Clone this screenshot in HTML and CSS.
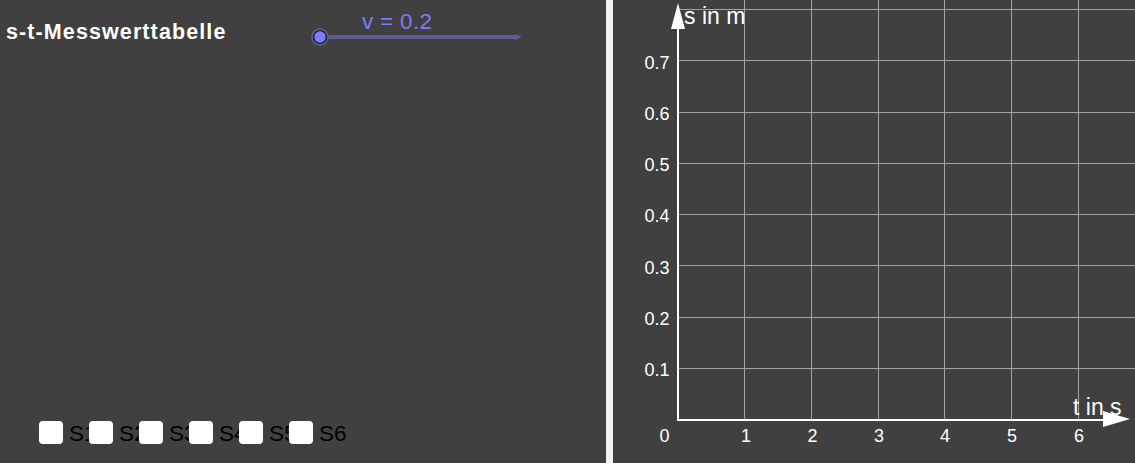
FILE: index.html
```html
<!DOCTYPE html>
<html lang="de">
<head>
<meta charset="utf-8">
<title>s-t-Messwerttabelle</title>
<link rel="stylesheet" href="styles.css">
</head>
<body>
<div class="app">
  <section class="left">
    <div class="top-row">
      <h1 class="title">s-t-Messwerttabelle</h1>
      <svg class="slider" width="222" height="50" viewBox="0 0 222 50">
        <line x1="10" y1="37" x2="206" y2="37" stroke="#5b5b96" stroke-width="4"/>
        <polygon points="205,34 212,37 205,40" fill="#5b5b96"/>
        <circle cx="10" cy="37" r="9" fill="#595985"/>
        <circle cx="10" cy="37" r="6.3" fill="#7b7bff" stroke="#1e1e2e" stroke-width="1.3"/>
        <text x="52" y="29" class="slider-label">v = 0.2</text>
      </svg>
    </div>
    <div class="checks">
      <div class="check"><span class="box"></span><span class="lbl">S1</span></div>
      <div class="check"><span class="box"></span><span class="lbl">S2</span></div>
      <div class="check"><span class="box"></span><span class="lbl">S3</span></div>
      <div class="check"><span class="box"></span><span class="lbl">S4</span></div>
      <div class="check"><span class="box"></span><span class="lbl">S5</span></div>
      <div class="check"><span class="box"></span><span class="lbl">S6</span></div>
    </div>
  </section>
  <div class="divider"></div>
  <section class="right">
    <svg class="graph" width="522" height="463" viewBox="0 0 522 463">
      <g class="grid">
        <line x1="131.5" y1="0" x2="131.5" y2="420"/>
        <line x1="198.5" y1="0" x2="198.5" y2="420"/>
        <line x1="265.5" y1="0" x2="265.5" y2="420"/>
        <line x1="331.5" y1="0" x2="331.5" y2="420"/>
        <line x1="398.5" y1="0" x2="398.5" y2="420"/>
        <line x1="465.5" y1="0" x2="465.5" y2="420"/>
        <line x1="65" y1="368.5" x2="522" y2="368.5"/>
        <line x1="65" y1="317.5" x2="522" y2="317.5"/>
        <line x1="65" y1="265.5" x2="522" y2="265.5"/>
        <line x1="65" y1="214.5" x2="522" y2="214.5"/>
        <line x1="65" y1="163.5" x2="522" y2="163.5"/>
        <line x1="65" y1="112.5" x2="522" y2="112.5"/>
        <line x1="65" y1="60.5" x2="522" y2="60.5"/>
        <line x1="65" y1="9.5" x2="522" y2="9.5"/>
      </g>
      <g class="axes">
        <line x1="65" y1="421" x2="65" y2="20"/>
        <line x1="64" y1="420" x2="500" y2="420"/>
        <polygon points="65,3 58,29 72,29"/>
        <polygon points="517,419 490,411 490,427"/>
      </g>
      <g class="ytick">
        <text x="56.5" y="69">0.7</text>
        <text x="56.5" y="120">0.6</text>
        <text x="56.5" y="171">0.5</text>
        <text x="56.5" y="222">0.4</text>
        <text x="56.5" y="274">0.3</text>
        <text x="56.5" y="325">0.2</text>
        <text x="56.5" y="376">0.1</text>
      </g>
      <g class="xtick">
        <text x="51.5" y="442">0</text>
        <text x="133" y="442">1</text>
        <text x="199.5" y="442">2</text>
        <text x="266" y="442">3</text>
        <text x="332" y="442">4</text>
        <text x="399" y="442">5</text>
        <text x="466" y="442">6</text>
      </g>
      <text class="axis-label" x="71" y="24">s in m</text>
      <text class="axis-label" x="460" y="415">t in s</text>
    </svg>
  </section>
</div>
</body>
</html>
```
FILE: styles.css
```css
html, body {
  margin: 0;
  padding: 0;
  background: #404040;
  overflow: hidden;
}

.app {
  display: flex;
  width: 1135px;
  height: 463px;
  font-family: "Liberation Sans", Arial, sans-serif;
}

.left {
  width: 606px;
  flex: 0 0 606px;
  display: flex;
  flex-direction: column;
  justify-content: space-between;
  padding-bottom: 18px;
  box-sizing: border-box;
}

.top-row {
  display: flex;
  align-items: flex-start;
  padding-left: 6px;
}

.title {
  flex: 0 0 304px;
  margin: 20px 0 0 0;
  font-size: 21.5px;
  line-height: 24px;
  font-weight: bold;
  letter-spacing: 1.1px;
  color: #ffffff;
  white-space: nowrap;
}

.slider {
  display: block;
}

.slider-label {
  font-family: "Liberation Sans", Arial, sans-serif;
  font-size: 22.5px;
  letter-spacing: 0.3px;
  fill: #7b7bff;
}

.checks {
  display: flex;
  padding-left: 39px;
}

.check {
  width: 50px;
  flex: 0 0 50px;
  display: flex;
  align-items: flex-start;
  gap: 6px;
  white-space: nowrap;
}

.box {
  width: 24px;
  height: 23px;
  flex: 0 0 24px;
  background: #ffffff;
  border-radius: 4px;
}

.lbl {
  font-size: 22.5px;
  line-height: 23px;
  margin-top: 1.5px;
  color: #000000;
}

.divider {
  width: 7px;
  flex: 0 0 7px;
  background: #f2f2f2;
}

.right {
  flex: 1;
}

.graph {
  display: block;
}

.grid line {
  stroke: #a3a3a3;
  stroke-width: 1;
}

.axes line {
  stroke: #ffffff;
  stroke-width: 2;
}

.axes polygon {
  fill: #ffffff;
}

.ytick text {
  font-family: "Liberation Sans", Arial, sans-serif;
  font-size: 18px;
  fill: #ffffff;
  text-anchor: end;
}

.xtick text {
  font-family: "Liberation Sans", Arial, sans-serif;
  font-size: 18px;
  fill: #ffffff;
  text-anchor: middle;
}

.axis-label {
  font-family: "Liberation Sans", Arial, sans-serif;
  font-size: 23px;
  fill: #ffffff;
}
```
